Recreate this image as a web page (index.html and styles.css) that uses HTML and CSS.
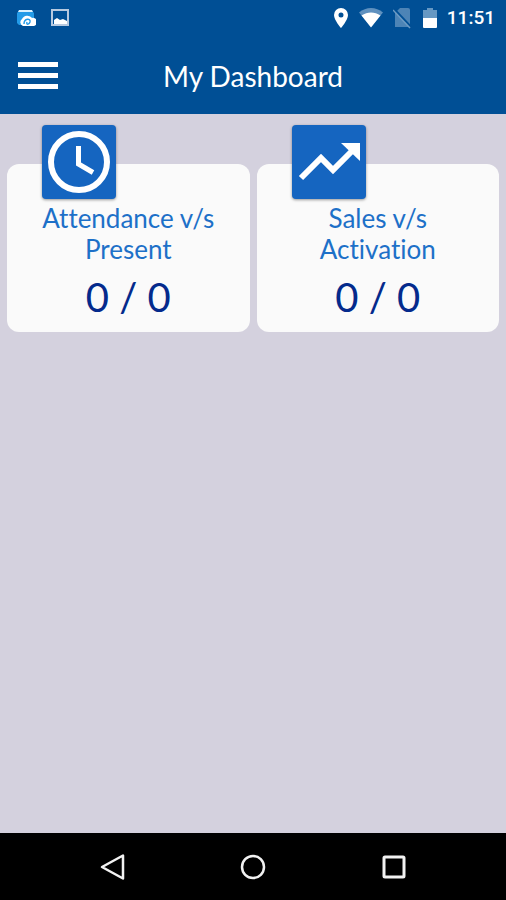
FILE: index.html
```html
<!DOCTYPE html>
<html lang="en">
<head>
<meta charset="utf-8">
<meta name="viewport" content="width=device-width, initial-scale=1">
<title>My Dashboard</title>
<link rel="stylesheet" href="styles.css">
</head>
<body>
<div class="status">
  <div class="status-group status-left">
    <svg width="20" height="20" viewBox="0 0 20 20" aria-hidden="true">
      <path fill="#239be8" d="M1 5l2-2h13l2 2v12H3l-2-2z"/>
      <path fill="#d9f1ff" d="M3 2h13l1 2H2z"/>
      <path fill="#fff" d="M7 18a4 4 0 0 1-1-7 6 6 0 0 1 10-1 4 4 0 0 1 2 8z"/>
      <path fill="none" stroke="#239be8" stroke-width="1.400" d="M8 16c0-6 7-6 6-2-1 3-4 3-3 0"/>
    </svg>
    <svg width="20" height="20" viewBox="0 0 20 20" aria-hidden="true">
      <rect x="1" y="2" width="16" height="15" fill="none" stroke="#b7c9df" stroke-width="2"/>
      <path fill="#fff" d="M3 12l3-2 3 2 3-1 4 2v3H3z"/>
    </svg>
  </div>
  <div class="status-group status-right">
    <svg width="16" height="22" viewBox="0 0 16 22" aria-hidden="true">
      <path fill="#fff" fill-rule="evenodd" d="M8 1a7 7 0 0 0-7 7c0 5 7 13 7 13s7-8 7-13a7 7 0 0 0-7-7zm0 4.500a2.500 2.500 0 1 1 0 5 2.500 2.500 0 0 1 0-5z"/>
    </svg>
    <svg width="24" height="22" viewBox="0 0 24 22" aria-hidden="true">
      <path fill="#5f91bf" d="M0 5.500C7-.5 17-.5 24 5.500L12 20z"/>
      <path fill="#fff" d="M2.500 8.500c6-4 13-4 19 0L12 20.500z"/>
    </svg>
    <svg width="20" height="22" viewBox="0 0 20 22" aria-hidden="true">
      <path fill="#4d84b6" d="M7 1h8a2 2 0 0 1 2 2v17H2V6z"/>
      <path stroke="#004f95" stroke-width="2.500" d="M1 2l17 18"/>
      <path stroke="#6d9bc4" stroke-width="1.500" d="M0 3l17 18"/>
    </svg>
    <svg width="14" height="22" viewBox="0 0 14 22" aria-hidden="true">
      <path fill="#6698c3" d="M4 1h6v2h4v8H0V3h4z"/>
      <path fill="#fff" d="M0 11h14v9a1 1 0 0 1-1 1H1a1 1 0 0 1-1-1z"/>
    </svg>
    <time class="clock">11:51</time>
  </div>
</div>
<header class="appbar">
  <button class="menu" type="button" aria-label="Menu">
    <svg width="40" height="28" viewBox="0 0 40 28" aria-hidden="true">
      <path fill="#fff" d="M0 0h40v5H0zM0 11h40v5H0zM0 22h40v5H0z"/>
    </svg>
  </button>
  <h1 class="title">My Dashboard</h1>
</header>
<main class="cards">
  <section class="card">
    <div class="badge">
      <svg width="74" height="74" viewBox="0 0 74 74" aria-hidden="true">
        <circle cx="37" cy="37" r="28" fill="none" stroke="#fff" stroke-width="6"/>
        <path fill="none" stroke="#fff" stroke-width="5" d="M36.500 21v18L51 47.500"/>
      </svg>
    </div>
    <h2 class="label">Attendance v/s<br>Present</h2>
    <p class="value">0 / 0</p>
  </section>
  <section class="card">
    <div class="badge">
      <svg width="74" height="74" viewBox="0 0 74 74" aria-hidden="true">
        <path fill="none" stroke="#fff" stroke-width="6" d="M9 53l20-20 12 12 20-20"/>
        <path fill="#fff" d="M49 18h19v18z"/>
      </svg>
    </div>
    <h2 class="label">Sales v/s<br>Activation</h2>
    <p class="value">0 / 0</p>
  </section>
</main>
<nav class="navbar">
  <button class="nav" type="button" aria-label="Back">
    <svg width="28" height="28" viewBox="0 0 28 28" aria-hidden="true">
      <path fill="none" stroke="#f2f2f2" stroke-width="2.500" stroke-linejoin="round" d="M25 2.500v23L4 14z"/>
    </svg>
  </button>
  <button class="nav" type="button" aria-label="Home">
    <svg width="28" height="28" viewBox="0 0 28 28" aria-hidden="true">
      <circle cx="14" cy="14" r="11" fill="none" stroke="#f2f2f2" stroke-width="2.500"/>
    </svg>
  </button>
  <button class="nav" type="button" aria-label="Recent apps">
    <svg width="28" height="28" viewBox="0 0 28 28" aria-hidden="true">
      <rect x="4" y="4" width="20" height="20" rx="1" fill="none" stroke="#f2f2f2" stroke-width="3"/>
    </svg>
  </button>
</nav>
</body>
</html>
```
FILE: styles.css
```css
* {
  box-sizing: border-box;
}

body {
  margin: 0;
  min-height: 100vh;
  display: flex;
  flex-direction: column;
  background: #d4d1de;
  font-family: Lato, "Open Sans", sans-serif;
  font-variant-ligatures: none;
}

h1,
h2,
p {
  margin: 0;
  font-weight: 400;
}

svg {
  display: block;
}

button {
  padding: 0;
  border: 0;
  background: none;
}

.status {
  display: flex;
  justify-content: space-between;
  align-items: center;
  height: 38px;
  padding: 0 11px 2px 16px;
  background: #004f95;
}

.status-group {
  display: flex;
  align-items: center;
}

.status-left {
  gap: 15px;
}

.status-right {
  gap: 10px;
}

.clock {
  color: #fff;
  font: 500 19px/36px Roboto, sans-serif;
}

.appbar {
  display: grid;
  grid-template-columns: 40px 1fr 40px;
  align-items: center;
  height: 76px;
  padding: 0 18px;
  background: #004f95;
}

.title {
  color: #fff;
  font-size: 28px;
  line-height: 36px;
  text-align: center;
}

.cards {
  flex: 1;
  display: grid;
  grid-template-columns: 1fr 1fr;
  align-items: start;
  gap: 7px;
  padding: 50px 7px 0;
}

.card {
  position: relative;
  padding: 39px 8px 3px;
  border-radius: 12px;
  background: #fafafa;
  text-align: center;
}

.badge {
  position: absolute;
  top: -39px;
  left: 35px;
  border-radius: 4px;
  background: #1565c0;
  box-shadow: 0 1px 3px rgba(0, 0, 0, 0.4);
}

.label {
  color: #1d70c8;
  font-size: 26px;
  line-height: 31px;
}

.value {
  color: #042a8c;
  font-size: 40px;
  line-height: 64px;
}

.navbar {
  display: flex;
  justify-content: center;
  align-items: center;
  gap: 93px;
  height: 67px;
  background: #000;
}

.nav {
  display: grid;
  place-items: center;
  width: 48px;
  height: 48px;
}
```
